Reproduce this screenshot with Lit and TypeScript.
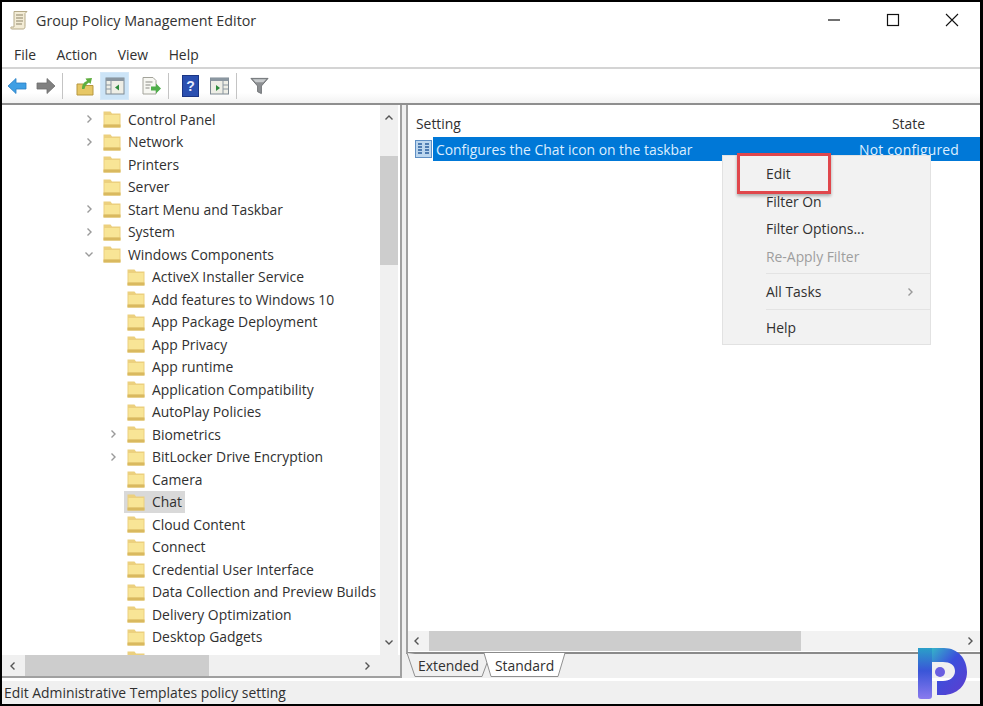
import { LitElement, html, css } from "lit";
import { customElement } from "lit/decorators.js";

type Row = { t: string; l: 1 | 2; c?: ">" | "v"; sel?: boolean };
const rows: Row[] = [
  { t: "Control Panel", l: 1, c: ">" },
  { t: "Network", l: 1, c: ">" },
  { t: "Printers", l: 1 },
  { t: "Server", l: 1 },
  { t: "Start Menu and Taskbar", l: 1, c: ">" },
  { t: "System", l: 1, c: ">" },
  { t: "Windows Components", l: 1, c: "v" },
  { t: "ActiveX Installer Service", l: 2 },
  { t: "Add features to Windows 10", l: 2 },
  { t: "App Package Deployment", l: 2 },
  { t: "App Privacy", l: 2 },
  { t: "App runtime", l: 2 },
  { t: "Application Compatibility", l: 2 },
  { t: "AutoPlay Policies", l: 2 },
  { t: "Biometrics", l: 2, c: ">" },
  { t: "BitLocker Drive Encryption", l: 2, c: ">" },
  { t: "Camera", l: 2 },
  { t: "Chat", l: 2, sel: true },
  { t: "Cloud Content", l: 2 },
  { t: "Connect", l: 2 },
  { t: "Credential User Interface", l: 2 },
  { t: "Data Collection and Preview Builds", l: 2 },
  { t: "Delivery Optimization", l: 2 },
  { t: "Desktop Gadgets", l: 2 },
  { t: "", l: 2 },
];

const folder = html`<svg class="folder" viewBox="0 0 18 18" width="18" height="18">
  <path d="M.5 1.500h7L9 3.500h8.500V17.500H.5z" fill="#ecd07e"/>
  <path d="M1.500 5h15v9.500h-15z" fill="#f8e596"/>
  <path d="M.5 14.500h17v3H.5z" fill="#d9b95f"/>
</svg>`;

const chev = (d: string, cls = "chev") => html`<svg class=${cls} viewBox="0 0 10 10" width="10" height="10">
  <path d=${d} fill="none" stroke="currentColor" stroke-width="1.4"/></svg>`;
const RIGHT = "M3.5 1.5 7 5 3.5 8.5";
const LEFT = "M6.5 1.5 3 5 6.5 8.5";
const DOWN = "M1.5 3.5 5 7 8.5 3.5";
const UP = "M1.5 6.5 5 3 8.5 6.5";

@customElement("app-root")
export class AppRoot extends LitElement {
  static styles = css`
    :host { display: block; width: 983px; height: 706px; font-family: "Open Sans", "Noto Sans", sans-serif; color: #303030; }
    * { box-sizing: border-box; }
    .win { position: relative; width: 983px; height: 706px; background: #fff; border: solid #000; border-width: 2px 3px 2px 2px; display: flex; flex-direction: column; overflow: hidden; }
    .title { height: 39px; flex: none; display: flex; align-items: center; padding: 0 0 3px 8px; font-size: 14.3px; gap: 8px; color: #333; }
    .wbtns { margin-left: auto; display: flex; }
    .wbtn { width: 59px; height: 36px; display: flex; align-items: center; justify-content: center; color: #111; }
    .wbtn.last { margin-right: -1px; }
    .menu { height: 28px; flex: none; display: flex; align-items: center; padding-left: 12px; gap: 20.5px; font-size: 13.9px; border-bottom: 2px solid #d4d4d4; }
    .toolbar { height: 36px; flex: none; display: flex; align-items: center; padding: 0 0 0 4px; background: linear-gradient(#fff 70%, #f2f2f2); border-bottom: 2px solid #8f8f8f; }
    .ti { display: flex; align-items: center; justify-content: center; flex: none; }
    .sep { width: 1px; height: 26px; background: #c4c4c4; flex: none; }
    .on { width: 29px; height: 28px; background: #cce4f7; border: 1px solid #d5e8f8; margin-left: 6px; }
    .panes { flex: 1; min-height: 0; display: flex; gap: 4px; background: #f0f0f0; }
    .left { width: 400px; flex: none; display: flex; flex-direction: column; background: #fff; border-right: 2px solid #a0a0a0; border-bottom: 2px solid #a0a0a0; }
    .ltop { flex: 1; min-height: 0; display: flex; }
    .tree { flex: 1; min-width: 0; overflow: hidden; padding-top: 3px; }
    .row { height: 22.5px; display: flex; align-items: center; font-size: 13.9px; white-space: nowrap; position: relative; }
    .row.l1 { padding-left: 101px; }
    .row.l2 { padding-left: 122px; }
    .row .chev { position: absolute; margin-left: -19px; color: #9a9a9a; }
    .row.l2 .chev { margin-left: -16px; }
    .row.l1 .cell { margin-left: -3px; }
    .cell { display: flex; align-items: center; height: 22px; padding: 0 3px; gap: 7px; }
    .row.sel .cell { background: #d9d9d9; }
    .vs { width: 18px; flex: none; margin-right: 2px; background: #f0f0f0; display: flex; flex-direction: column; align-items: center; color: #555; padding: 8px 0; }
    .vs .th { width: 18px; height: 109px; background: #cdcdcd; margin-top: 33px; flex: none; }
    .hs { height: 21px; flex: none; background: #f0f0f0; display: flex; align-items: center; color: #555; }
    .hs .th { height: 100%; width: 184px; margin-left: 1px; background: #cdcdcd; }
    .hl { padding: 0 6px; display: flex; }
    .hr2 { margin-right: 28px; display: flex; }
    .sp { flex: 1; }
    .right { flex: 1; min-width: 0; display: flex; flex-direction: column; }
    .rbox { flex: 1; min-height: 0; display: flex; flex-direction: column; background: #fff; border-left: 2px solid #a0a0a0; border-bottom: 2px solid #8a8a8a; }
    .rhead { height: 32px; flex: none; display: flex; align-items: center; font-size: 13.9px; padding: 5px 0 0 8px; }
    .rhead .st { margin-left: auto; margin-right: 55px; }
    .rrow { height: 24px; flex: none; display: flex; align-items: center; font-size: 13.9px; padding-left: 7px; }
    .rrow .bar { flex: 1; height: 24px; margin-left: 1px; background: #0078d7; color: #dceeff; display: flex; align-items: center; padding-left: 3px; }
    .rrow .nc { margin-left: auto; margin-right: 21px; letter-spacing: .2px; }
    .rfill { flex: 1; }
    .rh { height: 20px; flex: none; margin: 0 0 1px; background: #f2f2f2; display: flex; align-items: center; color: #555; }
    .rh .th { width: 372px; height: 100%; background: #cdcdcd; }
    .rhl { width: 21px; padding-left: 4px; display: flex; }
    .rhr { margin-right: 5px; display: flex; }
    .tabs { height: 24px; flex: none; display: flex; font-size: 13.9px; position: relative; padding-left: 12px; }
    .tabs svg { position: absolute; left: 1px; top: -1px; }
    .tab { position: relative; line-height: 24px; }
    .tab.a { width: 77px; }
    .status { height: 23px; flex: none; background: #f0f0f0; font-size: 13.9px; display: flex; align-items: center; padding-left: 2px; margin-top: 3px; }
    .ctx { position: absolute; left: 722px; top: 155px; width: 209px; height: 190px; background: #f2f2f2; border: 1px solid #e2e2e2; font-size: 13.9px; padding: 4px 0 0 43px; display: flex; flex-direction: column; }
    .ctx .it { height: 27.5px; display: flex; align-items: center; flex: none; }
    .ctx .dis { color: #9e9e9e; }
    .ctx .hr { height: 1px; background: #e3e3e3; margin: 3px 0 4px; flex: none; }
    .ctx .arrow { position: absolute; right: 15px; color: #999; display: flex; }
    .red { position: absolute; left: 737px; top: 153px; width: 94px; height: 41px; border: 3px solid #e0474c; box-shadow: 0 2px 3px rgba(0,0,0,.3); }
    .logo { position: absolute; left: 918px; top: 648px; }
  `;

  render() {
    return html`<div class="win">
      <div class="title">
        <svg width="18" height="20" viewBox="0 0 18 20">
          <path d="M4 1.500h13l-2 2v13c0 2-1 2.500-2 2.500H2c-1.200 0-1.500-1.200-1-2h3z" fill="#f3ecd6" stroke="#b5aa88" stroke-width="1"/>
          <path d="M6 5h7M6 8h7M6 11h7M6 14h6" stroke="#8d8468" stroke-width="1"/>
        </svg>
        <span>Group Policy Management Editor</span>
        <div class="wbtns">
          <div class="wbtn"><svg width="14" height="14" viewBox="0 0 14 14"><path d="M1 7h12" stroke="currentColor" stroke-width="1.200"/></svg></div>
          <div class="wbtn"><svg width="14" height="14" viewBox="0 0 14 14"><rect x="1.500" y="1.500" width="11" height="11" fill="none" stroke="currentColor" stroke-width="1.200"/></svg></div>
          <div class="wbtn last"><svg width="14" height="14" viewBox="0 0 14 14"><path d="M1 1l12 12M13 1 1 13" stroke="currentColor" stroke-width="1.100"/></svg></div>
        </div>
      </div>
      <div class="menu"><span>File</span><span>Action</span><span>View</span><span>Help</span></div>
      <div class="toolbar">
        <div class="ti" style="width:21px"><svg width="20" height="18" viewBox="0 0 20 18"><path d="M9 1.500 1 9l8 7.500V12h10V6H9z" fill="#3f9fe4" stroke="#2a7fc4" stroke-width=".8"/></svg></div>
        <div class="ti" style="width:8px"></div>
        <div class="ti" style="width:21px"><svg width="20" height="18" viewBox="0 0 20 18"><path d="M11 1.500 19 9l-8 7.500V12H1V6h10z" fill="#808080" stroke="#6d6d6d" stroke-width=".8"/></svg></div>
        <div class="ti" style="width:6px"></div><div class="sep"></div>
        <div class="ti" style="width:13px"></div>
        <div class="ti" style="width:18px"><svg width="18" height="20" viewBox="0 0 18 20"><path d="M1 8h6l1.500 1.500H17V19H1z" fill="#e7c765" stroke="#b7973f"/><path d="M6 13C6 8 8 6 11 5L9.500 2.500 16 2l-1.500 6L13 6.500C10.500 8 9 10 8.500 13z" fill="#5fae3f"/></svg></div>
        <div class="ti on"><svg width="20" height="18" viewBox="0 0 20 18"><rect x="1" y="1" width="18" height="16" fill="#eeeee6" stroke="#7f8a93"/><path d="M1 1h18v3H1z" fill="#8a96a0"/><path d="M6 4v13M1 8h5M1 12h5" stroke="#8a96a0"/><path d="M14 7.500v6L10 10.500z" fill="#2e8b3c"/></svg></div>
        <div class="ti" style="width:13px"></div>
        <div class="ti" style="width:19px"><svg width="19" height="20" viewBox="0 0 19 20"><path d="M1 1.500h10l3 3V18H1z" fill="#f7f7f2" stroke="#a3a39a"/><path d="M3.500 6h7M3.500 9h5M3.500 12h4" stroke="#8b8b85"/><path d="M9 10.500h5V7.500l5 5-5 5v-3H9z" fill="#4fae4a"/></svg></div>
        <div class="ti" style="width:7px"></div><div class="sep"></div>
        <div class="ti" style="width:13px"></div>
        <div class="ti" style="width:17px"><svg width="17" height="22" viewBox="0 0 17 22"><rect x=".5" y=".5" width="16" height="21" fill="#2a4fb0" stroke="#1b3585"/><text x="8.500" y="16" font-size="14" font-family="Liberation Sans" font-weight="700" fill="#e6ecff" text-anchor="middle">?</text></svg></div>
        <div class="ti" style="width:11px"></div>
        <div class="ti" style="width:19px"><svg width="19" height="18" viewBox="0 0 19 18"><rect x=".5" y="1" width="18" height="16" fill="#eeeee6" stroke="#7f8a93"/><path d="M.5 1h18v3H.5z" fill="#8a96a0"/><path d="M13 4v13M13 8h5M13 12h5" stroke="#8a96a0"/><path d="M6 8v6l4-3z" fill="#2e8b3c"/></svg></div>
        <div class="ti" style="width:7px"></div><div class="sep"></div>
        <div class="ti" style="width:13px"></div>
        <div class="ti" style="width:19px"><svg width="19" height="18" viewBox="0 0 20 18"><path d="M1 1h18l-7 8v8l-4-2V9z" fill="#8c8f92" stroke="#6f7275"/><path d="M3 2h14l-3 3H6z" fill="#c9ccce"/></svg></div>
      </div>
      <div class="panes">
        <div class="left">
          <div class="ltop">
            <div class="tree">
              ${rows.map((r) => html`<div class="row ${r.l === 1 ? "l1" : "l2"} ${r.sel ? "sel" : ""}">
                ${r.c ? chev(r.c === ">" ? RIGHT : DOWN) : ""}
                <div class="cell">${folder}<span>${r.t}</span></div>
              </div>`)}
            </div>
            <div class="vs">
              ${chev(UP, "a")}
              <div class="th"></div>
              <div class="sp"></div>
              ${chev(DOWN, "a")}
            </div>
          </div>
          <div class="hs">
            <div class="hl">${chev(LEFT, "a")}</div>
            <div class="th"></div>
            <div class="sp"></div>
            <div class="hr2">${chev(RIGHT, "a")}</div>
          </div>
        </div>
        <div class="right">
          <div class="rbox">
            <div class="rhead"><span>Setting</span><span class="st">State</span></div>
            <div class="rrow">
              <svg width="17" height="18" viewBox="0 0 17 18"><rect x=".5" y=".5" width="16" height="17" fill="#bcd6ee" stroke="#5f8fc4"/><path d="M3 4h4M3 7h4M3 10h4M3 13h4M10 4h4M10 7h4M10 10h4M10 13h4" stroke="#2a5f9e" stroke-width="1.300"/></svg>
              <div class="bar"><span>Configures the Chat icon on the taskbar</span><span class="nc">Not configured</span></div>
            </div>
            <div class="rfill"></div>
            <div class="rh">
              <div class="rhl">${chev(LEFT, "a")}</div>
              <div class="th"></div>
              <div class="sp"></div>
              <div class="rhr">${chev(RIGHT, "a")}</div>
            </div>
          </div>
          <div class="tabs">
            <svg width="170" height="26" viewBox="0 0 170 26"><path d="M0 0 8 23.500h67L80 10" fill="#f0f0f0" stroke="#8f8f8f"/><path d="M77 0 84 23.500h67L158 0" fill="#fff" stroke="#8f8f8f"/></svg>
            <span class="tab a">Extended</span>
            <span class="tab b">Standard</span>
          </div>
        </div>
      </div>
      <div class="status">Edit Administrative Templates policy setting</div>
    </div>
    <div class="ctx">
      <div class="it">Edit</div>
      <div class="it">Filter On</div>
      <div class="it">Filter Options...</div>
      <div class="it dis">Re-Apply Filter</div>
      <div class="hr"></div>
      <div class="it">All Tasks<span class="arrow">${chev(RIGHT, "a")}</span></div>
      <div class="hr"></div>
      <div class="it">Help</div>
    </div>
    <div class="red"></div>
    <svg class="logo" width="50" height="52" viewBox="0 0 50 52">
      <defs>
        <linearGradient id="g1" x1="0" y1="0" x2="0" y2="1"><stop offset="0" stop-color="#2aa0c8"/><stop offset=".45" stop-color="#3a55d8"/><stop offset="1" stop-color="#8a7aee"/></linearGradient>
        <linearGradient id="g2" x1="0" y1="0" x2=".8" y2="1"><stop offset="0" stop-color="#35b4c8"/><stop offset=".45" stop-color="#3b4fdc"/><stop offset="1" stop-color="#5a3fd0"/></linearGradient>
      </defs>
      <path d="M14 0H26C40 0 49 11 49 24 49 37 39 47 25 47H19V33H25C32 33 37 29 37 23 37 17 32 14 25 14H14z" fill="url(#g2)"/>
      <path d="M0 0H14V48Q14 51 11 51H3Q0 51 0 48z" fill="url(#g1)"/>
      <circle cx="22" cy="24" r="5" fill="#6a5fe0"/>
    </svg>`;
  }
}
